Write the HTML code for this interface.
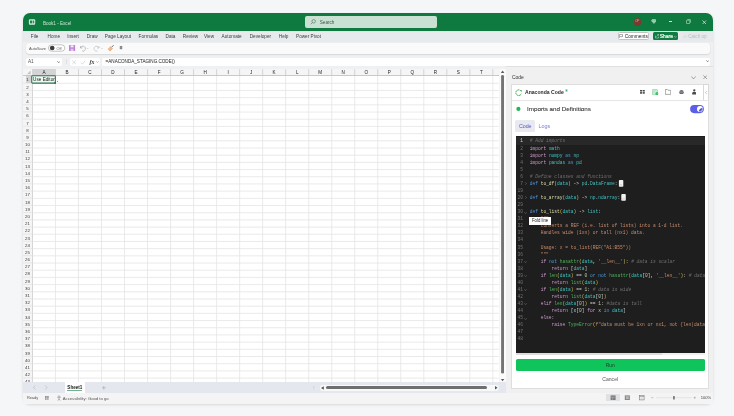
<!DOCTYPE html><html><head><meta charset="utf-8"><style>
html,body{margin:0;padding:0;width:734px;height:416px;overflow:hidden;background:#f5f6f8;font-family:"Liberation Sans", sans-serif;}
*{box-sizing:border-box}
</style></head><body><div style="position:absolute;left:0;top:0;width:734px;height:416px;will-change:transform">
<div style="position:absolute;left:23px;top:13.2px;width:689.90px;height:390.80px;background:#eef0f2;border-radius:7px;box-shadow:0 1px 3px rgba(0,0,0,.12);overflow:hidden"></div>
<div style="position:absolute;left:23px;top:13.2px;width:689.90px;height:17.80px;background:#0e7a3f;border-radius:7px 7px 0 0"></div>
<div style="position:absolute;left:23px;top:31px;width:689.90px;height:1.00px;background:#d3ede1"></div>
<div style="position:absolute;left:23px;top:32px;width:689.90px;height:9.50px;background:#e8ebee"></div>
<svg style="position:absolute;left:0;top:0" width="734" height="416"><rect x="28.9" y="19.2" width="6.3" height="5.5" rx="1" fill="#cfeedd"/><rect x="30" y="20.5" width="2" height="2.9" fill="#2a7f52"/><rect x="32.6" y="20.5" width="1.6" height="2.9" fill="#3d8c60"/></svg>
<div style="position:absolute;left:42.9px;top:20.54px;font-size:4.6px;line-height:5.52px;color:#c9e6d3;font-weight:normal;white-space:pre;">Book1 - Excel</div>
<div style="position:absolute;left:305px;top:16.3px;width:132.40px;height:11.30px;background:#c9e1d3;border-radius:2px"></div>
<svg style="position:absolute;left:310px;top:19.4px" width="6" height="6" viewBox="0 0 6 6"><circle cx="3.7" cy="2.3" r="1.75" fill="none" stroke="#3a5646" stroke-width="0.5"/><line x1="2.4" y1="3.6" x2="0.7" y2="5.3" stroke="#3a5646" stroke-width="0.5"/></svg>
<div style="position:absolute;left:319.8px;top:20.24px;font-size:4.6px;line-height:5.52px;color:#3d5a4a;font-weight:normal;white-space:pre;">Search</div>
<div style="position:absolute;left:633.5px;top:18.4px;width:7.4px;height:7.4px;border-radius:50%;background:#7a3a30"></div>
<div style="position:absolute;left:537.2px;top:20.38px;width:200px;text-align:center;font-size:3.2px;line-height:3.84px;color:#e7a99c;font-weight:normal;white-space:pre;">OP</div>
<svg style="position:absolute;left:650.6px;top:19.4px" width="5.8" height="5" viewBox="0 0 5.8 5"><path d="M0.4 1.6 L1.5 0.4 H4.3 L5.4 1.6 L2.9 4.6 Z" fill="#d4efe0" stroke="#e8f6ee" stroke-width="0.4"/><path d="M0.6 1.7 H5.2 M2.2 0.5 L1.8 1.7 L2.9 4.4 L4 1.7 L3.6 0.5" fill="none" stroke="#107c41" stroke-width="0.3"/></svg>
<div style="position:absolute;left:668.8px;top:21.2px;width:3.40px;height:0.50px;background:#cfe8da"></div>
<svg style="position:absolute;left:685.6px;top:19.4px" width="5" height="5" viewBox="0 0 5 5"><rect x="0.4" y="1.2" width="3.4" height="3.4" rx="0.7" fill="none" stroke="#e0f2e8" stroke-width="0.55"/><path d="M1.4 0.4 H3.8 Q4.6 0.4 4.6 1.2 V3.6" fill="none" stroke="#e0f2e8" stroke-width="0.5"/></svg>
<svg style="position:absolute;left:702.4px;top:19.6px" width="4.6" height="4.6" viewBox="0 0 4.6 4.6"><path d="M0.5 0.5 L4.1 4.1 M4.1 0.5 L0.5 4.1" stroke="#e6f4ec" stroke-width="0.7"/></svg>
<div style="position:absolute;left:30.8px;top:33.88px;font-size:4.7px;line-height:5.64px;color:#3a3a3a;font-weight:normal;white-space:pre;">File</div>
<div style="position:absolute;left:47.6px;top:33.88px;font-size:4.7px;line-height:5.64px;color:#3a3a3a;font-weight:normal;white-space:pre;">Home</div>
<div style="position:absolute;left:67.2px;top:33.88px;font-size:4.7px;line-height:5.64px;color:#3a3a3a;font-weight:normal;white-space:pre;">Insert</div>
<div style="position:absolute;left:86.7px;top:33.88px;font-size:4.7px;line-height:5.64px;color:#3a3a3a;font-weight:normal;white-space:pre;">Draw</div>
<div style="position:absolute;left:104.8px;top:33.88px;font-size:4.7px;line-height:5.64px;color:#3a3a3a;font-weight:normal;white-space:pre;">Page Layout</div>
<div style="position:absolute;left:138.6px;top:33.88px;font-size:4.7px;line-height:5.64px;color:#3a3a3a;font-weight:normal;white-space:pre;">Formulas</div>
<div style="position:absolute;left:165.5px;top:33.88px;font-size:4.7px;line-height:5.64px;color:#3a3a3a;font-weight:normal;white-space:pre;">Data</div>
<div style="position:absolute;left:182.8px;top:33.88px;font-size:4.7px;line-height:5.64px;color:#3a3a3a;font-weight:normal;white-space:pre;">Review</div>
<div style="position:absolute;left:204px;top:33.88px;font-size:4.7px;line-height:5.64px;color:#3a3a3a;font-weight:normal;white-space:pre;">View</div>
<div style="position:absolute;left:221.6px;top:33.88px;font-size:4.7px;line-height:5.64px;color:#3a3a3a;font-weight:normal;white-space:pre;">Automate</div>
<div style="position:absolute;left:249.7px;top:33.88px;font-size:4.7px;line-height:5.64px;color:#3a3a3a;font-weight:normal;white-space:pre;">Developer</div>
<div style="position:absolute;left:278.8px;top:33.88px;font-size:4.7px;line-height:5.64px;color:#3a3a3a;font-weight:normal;white-space:pre;">Help</div>
<div style="position:absolute;left:296px;top:33.88px;font-size:4.7px;line-height:5.64px;color:#3a3a3a;font-weight:normal;white-space:pre;">Power Pivot</div>
<div style="position:absolute;left:617.7px;top:32.4px;width:31.00px;height:7.80px;background:#fff;border:0.5px solid #c4c4c4;border-radius:1.5px"></div>
<div style="position:absolute;left:624.8px;top:34.15px;font-size:4.75px;line-height:5.70px;color:#262626;font-weight:normal;white-space:pre;">Comments</div>
<svg style="position:absolute;left:619.2px;top:34.2px" width="4" height="4" viewBox="0 0 4 4"><path d="M0.4 0.4 H3.6 V2.6 H1.4 L0.4 3.5 Z" fill="none" stroke="#444" stroke-width="0.45"/></svg>
<div style="position:absolute;left:652.6px;top:32.4px;width:25.40px;height:7.80px;background:#107c41;border-radius:1.5px"></div>
<svg style="position:absolute;left:654.6px;top:34px" width="4" height="4.5" viewBox="0 0 4 4.5"><path d="M0.5 1.6 V4 H3.5 V2.6 M1.5 2.6 L3.6 0.5 M2.2 0.4 H3.6 V1.8" fill="none" stroke="#e8f4ec" stroke-width="0.45"/></svg>
<div style="position:absolute;left:659.8px;top:34.06px;font-size:4.9px;line-height:5.88px;color:#f4faf6;font-weight:normal;white-space:pre;-webkit-text-stroke:0.2px #f4faf6">Share</div>
<svg style="position:absolute;left:674.3px;top:35.8px" width="2.6" height="1.8" viewBox="0 0 2.6 1.8"><path d="M0.2 0.2 L1.3 1.5 L2.4 0.2" fill="none" stroke="#e8f4ec" stroke-width="0.45"/></svg>
<div style="position:absolute;left:681.7px;top:32.4px;width:26.50px;height:7.80px;background:#e6e8ea;border-radius:1.5px"></div>
<svg style="position:absolute;left:683.3px;top:35px" width="4" height="3" viewBox="0 0 4 3"><path d="M0.2 1.6 L1 2.6 L2 0.6 L2.8 1.6 H3.8" fill="none" stroke="#c2c6ca" stroke-width="0.4"/></svg>
<div style="position:absolute;left:688.2px;top:34.24px;font-size:4.6px;line-height:5.52px;color:#bcc0c4;font-weight:normal;white-space:pre;">Catch up</div>
<div style="position:absolute;left:25.7px;top:42.5px;width:683.90px;height:11.50px;background:#fafafa;border-radius:3px;box-shadow:0 0.6px 1.2px rgba(0,0,0,.18)"></div>
<div style="position:absolute;left:29.1px;top:46.54px;font-size:4.1px;line-height:4.92px;color:#555;font-weight:normal;white-space:pre;transform:scaleX(0.95);transform-origin:0 0">AutoSave</div>
<svg style="position:absolute;left:0;top:0" width="734" height="416"><rect x="48.4" y="44.8" width="16.4" height="6.4" rx="3.2" fill="#fff" stroke="#8c8c8c" stroke-width="0.5"/><circle cx="52.2" cy="48" r="2.35" fill="#3c3c3c"/></svg>
<div style="position:absolute;left:56.6px;top:46.52px;font-size:3.8px;line-height:4.56px;color:#666;font-weight:normal;white-space:pre;">Off</div>
<svg style="position:absolute;left:0;top:0" width="734" height="416"><rect x="69" y="45" width="6.1" height="6" rx="0.6" fill="#bf80d8"/><rect x="70.5" y="45.3" width="3.1" height="2.1" fill="#f4e8f9"/><rect x="70.6" y="48.7" width="2.9" height="2.3" fill="#e4c8ef"/></svg>
<svg style="position:absolute;left:79px;top:44.5px" width="10" height="7" viewBox="0 0 10 7"><path d="M1.5 1 V3 H3.5 M1.6 2.9 A2.5 2.5 0 1 1 3 6" fill="none" stroke="#9aa0a6" stroke-width="0.6"/><path d="M7.8 3 L8.6 3.8 L9.4 3" fill="none" stroke="#b0b4b8" stroke-width="0.5"/></svg>
<svg style="position:absolute;left:93px;top:44.5px" width="10" height="7" viewBox="0 0 10 7"><path d="M6 1 V3 H4 M5.9 2.9 A2.5 2.5 0 1 0 4.5 6" fill="none" stroke="#b4b8bc" stroke-width="0.6"/><path d="M8.2 3 L9 3.8 L9.8 3" fill="none" stroke="#b0b4b8" stroke-width="0.5"/></svg>
<svg style="position:absolute;left:0;top:0" width="734" height="416"><path d="M111.6 47.2 L113.6 45.2" stroke="#6a6a6a" stroke-width="1"/><path d="M108.6 48.4 L110.6 46.6 L112.6 48.4 L110.2 51 Q109 50.6 108.4 49.6 Z" fill="#f2b98c" stroke="#d98b4e" stroke-width="0.4"/></svg>
<svg style="position:absolute;left:0;top:0" width="734" height="416"><rect x="119.8" y="46" width="2.4" height="3.2" fill="#777"/><path d="M119.6 47 H122.4 M119.6 48.1 H122.4" stroke="#ddd" stroke-width="0.3"/></svg>
<div style="position:absolute;left:25.7px;top:57.8px;width:36.00px;height:8.30px;background:#fff;border-radius:2px"></div>
<div style="position:absolute;left:27.9px;top:59.18px;font-size:4.7px;line-height:5.64px;color:#555;font-weight:normal;white-space:pre;">A1</div>
<svg style="position:absolute;left:56.8px;top:60.8px" width="3.4" height="2.2" viewBox="0 0 3.4 2.2"><path d="M0.3 0.3 L1.7 1.8 L3.1 0.3" fill="none" stroke="#444" stroke-width="0.6"/></svg>
<svg style="position:absolute;left:65px;top:59px" width="3" height="6" viewBox="0 0 3 6"><circle cx="1.3" cy="0.9" r="0.35" fill="#999"/><circle cx="1.3" cy="2.5" r="0.35" fill="#999"/><circle cx="1.3" cy="4.1" r="0.35" fill="#999"/></svg>
<div style="position:absolute;left:69.9px;top:57.8px;width:30.20px;height:8.30px;background:#fff;border-radius:2px"></div>
<svg style="position:absolute;left:72px;top:59.5px" width="30" height="6" viewBox="0 0 30 6"><path d="M0.2 0.4 L4 4.2 M4 0.4 L0.2 4.2" stroke="#b4b4b4" stroke-width="0.45"/><path d="M8.8 2.6 L10.4 4.2 L13.2 0.6" fill="none" stroke="#b4b4b4" stroke-width="0.45"/></svg>
<div style="position:absolute;left:89.6px;top:58.52px;font-size:5.8px;line-height:6.96px;color:#333;font-weight:normal;white-space:pre;font-family:'Liberation Serif',serif"><i><b>fx</b></i></div>
<svg style="position:absolute;left:96.3px;top:61px" width="3" height="2" viewBox="0 0 3 2"><path d="M0.2 0.3 L1.5 1.6 L2.8 0.3" fill="none" stroke="#888" stroke-width="0.5"/></svg>
<div style="position:absolute;left:102.4px;top:57.8px;width:607.20px;height:8.30px;background:#fff;border-radius:2px"></div>
<div style="position:absolute;left:105.6px;top:59.34px;font-size:4.6px;line-height:5.52px;color:#222;font-weight:normal;white-space:pre;">=ANACONDA_STAGING.CODE()</div>
<svg style="position:absolute;left:705.6px;top:60.1px" width="3.4" height="2.2" viewBox="0 0 3.4 2.2"><path d="M0.3 0.3 L1.7 1.8 L3.1 0.3" fill="none" stroke="#444" stroke-width="0.6"/></svg>
<div style="position:absolute;left:23.0px;top:68.6px;width:475.80px;height:313.80px;background:#fff"></div>
<div style="position:absolute;left:23.0px;top:68.6px;width:475.80px;height:7.30px;background:#f5f5f5"></div>
<div style="position:absolute;left:23.0px;top:75.9px;width:9.45px;height:306.50px;background:#f5f5f5"></div>
<div style="position:absolute;left:32.45px;top:68.6px;width:23.02px;height:7.30px;background:#d4d4d4"></div>
<div style="position:absolute;left:25.8px;top:75.9px;width:6.65px;height:7.19px;background:#d4d4d4"></div>
<div style="position:absolute;left:23.0px;top:75.30000000000001px;width:475.80px;height:0.60px;background:#c9c9c9"></div>
<div style="position:absolute;left:31.85px;top:68.6px;width:0.60px;height:313.80px;background:#d6d6d6"></div>
<svg style="position:absolute;left:0;top:0" width="734" height="416"><line x1="55.47" y1="69.20" x2="55.47" y2="75.90" stroke="#c4c4c4" stroke-width="0.7"/><line x1="55.47" y1="75.90" x2="55.47" y2="382.40" stroke="#e4e4e4" stroke-width="0.8"/><line x1="78.49" y1="69.20" x2="78.49" y2="75.90" stroke="#c4c4c4" stroke-width="0.7"/><line x1="78.49" y1="75.90" x2="78.49" y2="382.40" stroke="#e4e4e4" stroke-width="0.8"/><line x1="101.51" y1="69.20" x2="101.51" y2="75.90" stroke="#c4c4c4" stroke-width="0.7"/><line x1="101.51" y1="75.90" x2="101.51" y2="382.40" stroke="#e4e4e4" stroke-width="0.8"/><line x1="124.53" y1="69.20" x2="124.53" y2="75.90" stroke="#c4c4c4" stroke-width="0.7"/><line x1="124.53" y1="75.90" x2="124.53" y2="382.40" stroke="#e4e4e4" stroke-width="0.8"/><line x1="147.55" y1="69.20" x2="147.55" y2="75.90" stroke="#c4c4c4" stroke-width="0.7"/><line x1="147.55" y1="75.90" x2="147.55" y2="382.40" stroke="#e4e4e4" stroke-width="0.8"/><line x1="170.57" y1="69.20" x2="170.57" y2="75.90" stroke="#c4c4c4" stroke-width="0.7"/><line x1="170.57" y1="75.90" x2="170.57" y2="382.40" stroke="#e4e4e4" stroke-width="0.8"/><line x1="193.59" y1="69.20" x2="193.59" y2="75.90" stroke="#c4c4c4" stroke-width="0.7"/><line x1="193.59" y1="75.90" x2="193.59" y2="382.40" stroke="#e4e4e4" stroke-width="0.8"/><line x1="216.61" y1="69.20" x2="216.61" y2="75.90" stroke="#c4c4c4" stroke-width="0.7"/><line x1="216.61" y1="75.90" x2="216.61" y2="382.40" stroke="#e4e4e4" stroke-width="0.8"/><line x1="239.63" y1="69.20" x2="239.63" y2="75.90" stroke="#c4c4c4" stroke-width="0.7"/><line x1="239.63" y1="75.90" x2="239.63" y2="382.40" stroke="#e4e4e4" stroke-width="0.8"/><line x1="262.65" y1="69.20" x2="262.65" y2="75.90" stroke="#c4c4c4" stroke-width="0.7"/><line x1="262.65" y1="75.90" x2="262.65" y2="382.40" stroke="#e4e4e4" stroke-width="0.8"/><line x1="285.67" y1="69.20" x2="285.67" y2="75.90" stroke="#c4c4c4" stroke-width="0.7"/><line x1="285.67" y1="75.90" x2="285.67" y2="382.40" stroke="#e4e4e4" stroke-width="0.8"/><line x1="308.69" y1="69.20" x2="308.69" y2="75.90" stroke="#c4c4c4" stroke-width="0.7"/><line x1="308.69" y1="75.90" x2="308.69" y2="382.40" stroke="#e4e4e4" stroke-width="0.8"/><line x1="331.71" y1="69.20" x2="331.71" y2="75.90" stroke="#c4c4c4" stroke-width="0.7"/><line x1="331.71" y1="75.90" x2="331.71" y2="382.40" stroke="#e4e4e4" stroke-width="0.8"/><line x1="354.73" y1="69.20" x2="354.73" y2="75.90" stroke="#c4c4c4" stroke-width="0.7"/><line x1="354.73" y1="75.90" x2="354.73" y2="382.40" stroke="#e4e4e4" stroke-width="0.8"/><line x1="377.75" y1="69.20" x2="377.75" y2="75.90" stroke="#c4c4c4" stroke-width="0.7"/><line x1="377.75" y1="75.90" x2="377.75" y2="382.40" stroke="#e4e4e4" stroke-width="0.8"/><line x1="400.77" y1="69.20" x2="400.77" y2="75.90" stroke="#c4c4c4" stroke-width="0.7"/><line x1="400.77" y1="75.90" x2="400.77" y2="382.40" stroke="#e4e4e4" stroke-width="0.8"/><line x1="423.79" y1="69.20" x2="423.79" y2="75.90" stroke="#c4c4c4" stroke-width="0.7"/><line x1="423.79" y1="75.90" x2="423.79" y2="382.40" stroke="#e4e4e4" stroke-width="0.8"/><line x1="446.81" y1="69.20" x2="446.81" y2="75.90" stroke="#c4c4c4" stroke-width="0.7"/><line x1="446.81" y1="75.90" x2="446.81" y2="382.40" stroke="#e4e4e4" stroke-width="0.8"/><line x1="469.83" y1="69.20" x2="469.83" y2="75.90" stroke="#c4c4c4" stroke-width="0.7"/><line x1="469.83" y1="75.90" x2="469.83" y2="382.40" stroke="#e4e4e4" stroke-width="0.8"/><line x1="492.85" y1="69.20" x2="492.85" y2="75.90" stroke="#c4c4c4" stroke-width="0.7"/><line x1="492.85" y1="75.90" x2="492.85" y2="382.40" stroke="#e4e4e4" stroke-width="0.8"/><line x1="32.45" y1="83.29" x2="498.80" y2="83.29" stroke="#e4e4e4" stroke-width="0.8"/><line x1="23.00" y1="83.09" x2="32.45" y2="83.09" stroke="#d8d8d8" stroke-width="0.5"/><line x1="32.45" y1="90.48" x2="498.80" y2="90.48" stroke="#e4e4e4" stroke-width="0.8"/><line x1="23.00" y1="90.28" x2="32.45" y2="90.28" stroke="#d8d8d8" stroke-width="0.5"/><line x1="32.45" y1="97.67" x2="498.80" y2="97.67" stroke="#e4e4e4" stroke-width="0.8"/><line x1="23.00" y1="97.47" x2="32.45" y2="97.47" stroke="#d8d8d8" stroke-width="0.5"/><line x1="32.45" y1="104.86" x2="498.80" y2="104.86" stroke="#e4e4e4" stroke-width="0.8"/><line x1="23.00" y1="104.66" x2="32.45" y2="104.66" stroke="#d8d8d8" stroke-width="0.5"/><line x1="32.45" y1="112.05" x2="498.80" y2="112.05" stroke="#e4e4e4" stroke-width="0.8"/><line x1="23.00" y1="111.85" x2="32.45" y2="111.85" stroke="#d8d8d8" stroke-width="0.5"/><line x1="32.45" y1="119.24" x2="498.80" y2="119.24" stroke="#e4e4e4" stroke-width="0.8"/><line x1="23.00" y1="119.04" x2="32.45" y2="119.04" stroke="#d8d8d8" stroke-width="0.5"/><line x1="32.45" y1="126.43" x2="498.80" y2="126.43" stroke="#e4e4e4" stroke-width="0.8"/><line x1="23.00" y1="126.23" x2="32.45" y2="126.23" stroke="#d8d8d8" stroke-width="0.5"/><line x1="32.45" y1="133.62" x2="498.80" y2="133.62" stroke="#e4e4e4" stroke-width="0.8"/><line x1="23.00" y1="133.42" x2="32.45" y2="133.42" stroke="#d8d8d8" stroke-width="0.5"/><line x1="32.45" y1="140.81" x2="498.80" y2="140.81" stroke="#e4e4e4" stroke-width="0.8"/><line x1="23.00" y1="140.61" x2="32.45" y2="140.61" stroke="#d8d8d8" stroke-width="0.5"/><line x1="32.45" y1="148.00" x2="498.80" y2="148.00" stroke="#e4e4e4" stroke-width="0.8"/><line x1="23.00" y1="147.80" x2="32.45" y2="147.80" stroke="#d8d8d8" stroke-width="0.5"/><line x1="32.45" y1="155.19" x2="498.80" y2="155.19" stroke="#e4e4e4" stroke-width="0.8"/><line x1="23.00" y1="154.99" x2="32.45" y2="154.99" stroke="#d8d8d8" stroke-width="0.5"/><line x1="32.45" y1="162.38" x2="498.80" y2="162.38" stroke="#e4e4e4" stroke-width="0.8"/><line x1="23.00" y1="162.18" x2="32.45" y2="162.18" stroke="#d8d8d8" stroke-width="0.5"/><line x1="32.45" y1="169.57" x2="498.80" y2="169.57" stroke="#e4e4e4" stroke-width="0.8"/><line x1="23.00" y1="169.37" x2="32.45" y2="169.37" stroke="#d8d8d8" stroke-width="0.5"/><line x1="32.45" y1="176.76" x2="498.80" y2="176.76" stroke="#e4e4e4" stroke-width="0.8"/><line x1="23.00" y1="176.56" x2="32.45" y2="176.56" stroke="#d8d8d8" stroke-width="0.5"/><line x1="32.45" y1="183.95" x2="498.80" y2="183.95" stroke="#e4e4e4" stroke-width="0.8"/><line x1="23.00" y1="183.75" x2="32.45" y2="183.75" stroke="#d8d8d8" stroke-width="0.5"/><line x1="32.45" y1="191.14" x2="498.80" y2="191.14" stroke="#e4e4e4" stroke-width="0.8"/><line x1="23.00" y1="190.94" x2="32.45" y2="190.94" stroke="#d8d8d8" stroke-width="0.5"/><line x1="32.45" y1="198.33" x2="498.80" y2="198.33" stroke="#e4e4e4" stroke-width="0.8"/><line x1="23.00" y1="198.13" x2="32.45" y2="198.13" stroke="#d8d8d8" stroke-width="0.5"/><line x1="32.45" y1="205.52" x2="498.80" y2="205.52" stroke="#e4e4e4" stroke-width="0.8"/><line x1="23.00" y1="205.32" x2="32.45" y2="205.32" stroke="#d8d8d8" stroke-width="0.5"/><line x1="32.45" y1="212.71" x2="498.80" y2="212.71" stroke="#e4e4e4" stroke-width="0.8"/><line x1="23.00" y1="212.51" x2="32.45" y2="212.51" stroke="#d8d8d8" stroke-width="0.5"/><line x1="32.45" y1="219.90" x2="498.80" y2="219.90" stroke="#e4e4e4" stroke-width="0.8"/><line x1="23.00" y1="219.70" x2="32.45" y2="219.70" stroke="#d8d8d8" stroke-width="0.5"/><line x1="32.45" y1="227.09" x2="498.80" y2="227.09" stroke="#e4e4e4" stroke-width="0.8"/><line x1="23.00" y1="226.89" x2="32.45" y2="226.89" stroke="#d8d8d8" stroke-width="0.5"/><line x1="32.45" y1="234.28" x2="498.80" y2="234.28" stroke="#e4e4e4" stroke-width="0.8"/><line x1="23.00" y1="234.08" x2="32.45" y2="234.08" stroke="#d8d8d8" stroke-width="0.5"/><line x1="32.45" y1="241.47" x2="498.80" y2="241.47" stroke="#e4e4e4" stroke-width="0.8"/><line x1="23.00" y1="241.27" x2="32.45" y2="241.27" stroke="#d8d8d8" stroke-width="0.5"/><line x1="32.45" y1="248.66" x2="498.80" y2="248.66" stroke="#e4e4e4" stroke-width="0.8"/><line x1="23.00" y1="248.46" x2="32.45" y2="248.46" stroke="#d8d8d8" stroke-width="0.5"/><line x1="32.45" y1="255.85" x2="498.80" y2="255.85" stroke="#e4e4e4" stroke-width="0.8"/><line x1="23.00" y1="255.65" x2="32.45" y2="255.65" stroke="#d8d8d8" stroke-width="0.5"/><line x1="32.45" y1="263.04" x2="498.80" y2="263.04" stroke="#e4e4e4" stroke-width="0.8"/><line x1="23.00" y1="262.84" x2="32.45" y2="262.84" stroke="#d8d8d8" stroke-width="0.5"/><line x1="32.45" y1="270.23" x2="498.80" y2="270.23" stroke="#e4e4e4" stroke-width="0.8"/><line x1="23.00" y1="270.03" x2="32.45" y2="270.03" stroke="#d8d8d8" stroke-width="0.5"/><line x1="32.45" y1="277.42" x2="498.80" y2="277.42" stroke="#e4e4e4" stroke-width="0.8"/><line x1="23.00" y1="277.22" x2="32.45" y2="277.22" stroke="#d8d8d8" stroke-width="0.5"/><line x1="32.45" y1="284.61" x2="498.80" y2="284.61" stroke="#e4e4e4" stroke-width="0.8"/><line x1="23.00" y1="284.41" x2="32.45" y2="284.41" stroke="#d8d8d8" stroke-width="0.5"/><line x1="32.45" y1="291.80" x2="498.80" y2="291.80" stroke="#e4e4e4" stroke-width="0.8"/><line x1="23.00" y1="291.60" x2="32.45" y2="291.60" stroke="#d8d8d8" stroke-width="0.5"/><line x1="32.45" y1="298.99" x2="498.80" y2="298.99" stroke="#e4e4e4" stroke-width="0.8"/><line x1="23.00" y1="298.79" x2="32.45" y2="298.79" stroke="#d8d8d8" stroke-width="0.5"/><line x1="32.45" y1="306.18" x2="498.80" y2="306.18" stroke="#e4e4e4" stroke-width="0.8"/><line x1="23.00" y1="305.98" x2="32.45" y2="305.98" stroke="#d8d8d8" stroke-width="0.5"/><line x1="32.45" y1="313.37" x2="498.80" y2="313.37" stroke="#e4e4e4" stroke-width="0.8"/><line x1="23.00" y1="313.17" x2="32.45" y2="313.17" stroke="#d8d8d8" stroke-width="0.5"/><line x1="32.45" y1="320.56" x2="498.80" y2="320.56" stroke="#e4e4e4" stroke-width="0.8"/><line x1="23.00" y1="320.36" x2="32.45" y2="320.36" stroke="#d8d8d8" stroke-width="0.5"/><line x1="32.45" y1="327.75" x2="498.80" y2="327.75" stroke="#e4e4e4" stroke-width="0.8"/><line x1="23.00" y1="327.55" x2="32.45" y2="327.55" stroke="#d8d8d8" stroke-width="0.5"/><line x1="32.45" y1="334.94" x2="498.80" y2="334.94" stroke="#e4e4e4" stroke-width="0.8"/><line x1="23.00" y1="334.74" x2="32.45" y2="334.74" stroke="#d8d8d8" stroke-width="0.5"/><line x1="32.45" y1="342.13" x2="498.80" y2="342.13" stroke="#e4e4e4" stroke-width="0.8"/><line x1="23.00" y1="341.93" x2="32.45" y2="341.93" stroke="#d8d8d8" stroke-width="0.5"/><line x1="32.45" y1="349.32" x2="498.80" y2="349.32" stroke="#e4e4e4" stroke-width="0.8"/><line x1="23.00" y1="349.12" x2="32.45" y2="349.12" stroke="#d8d8d8" stroke-width="0.5"/><line x1="32.45" y1="356.51" x2="498.80" y2="356.51" stroke="#e4e4e4" stroke-width="0.8"/><line x1="23.00" y1="356.31" x2="32.45" y2="356.31" stroke="#d8d8d8" stroke-width="0.5"/><line x1="32.45" y1="363.70" x2="498.80" y2="363.70" stroke="#e4e4e4" stroke-width="0.8"/><line x1="23.00" y1="363.50" x2="32.45" y2="363.50" stroke="#d8d8d8" stroke-width="0.5"/><line x1="32.45" y1="370.89" x2="498.80" y2="370.89" stroke="#e4e4e4" stroke-width="0.8"/><line x1="23.00" y1="370.69" x2="32.45" y2="370.69" stroke="#d8d8d8" stroke-width="0.5"/><line x1="32.45" y1="378.08" x2="498.80" y2="378.08" stroke="#e4e4e4" stroke-width="0.8"/><line x1="23.00" y1="377.88" x2="32.45" y2="377.88" stroke="#d8d8d8" stroke-width="0.5"/></svg>
<div style="position:absolute;left:-56.04px;top:69.74px;width:200px;text-align:center;font-size:4.6px;line-height:5.52px;color:#222;font-weight:normal;white-space:pre;">A</div>
<div style="position:absolute;left:-33.019999999999996px;top:69.74px;width:200px;text-align:center;font-size:4.6px;line-height:5.52px;color:#222;font-weight:normal;white-space:pre;">B</div>
<div style="position:absolute;left:-10.0px;top:69.74px;width:200px;text-align:center;font-size:4.6px;line-height:5.52px;color:#222;font-weight:normal;white-space:pre;">C</div>
<div style="position:absolute;left:13.019999999999996px;top:69.74px;width:200px;text-align:center;font-size:4.6px;line-height:5.52px;color:#222;font-weight:normal;white-space:pre;">D</div>
<div style="position:absolute;left:36.04000000000002px;top:69.74px;width:200px;text-align:center;font-size:4.6px;line-height:5.52px;color:#222;font-weight:normal;white-space:pre;">E</div>
<div style="position:absolute;left:59.06px;top:69.74px;width:200px;text-align:center;font-size:4.6px;line-height:5.52px;color:#222;font-weight:normal;white-space:pre;">F</div>
<div style="position:absolute;left:82.07999999999998px;top:69.74px;width:200px;text-align:center;font-size:4.6px;line-height:5.52px;color:#222;font-weight:normal;white-space:pre;">G</div>
<div style="position:absolute;left:105.10000000000002px;top:69.74px;width:200px;text-align:center;font-size:4.6px;line-height:5.52px;color:#222;font-weight:normal;white-space:pre;">H</div>
<div style="position:absolute;left:128.12px;top:69.74px;width:200px;text-align:center;font-size:4.6px;line-height:5.52px;color:#222;font-weight:normal;white-space:pre;">I</div>
<div style="position:absolute;left:151.14px;top:69.74px;width:200px;text-align:center;font-size:4.6px;line-height:5.52px;color:#222;font-weight:normal;white-space:pre;">J</div>
<div style="position:absolute;left:174.16000000000003px;top:69.74px;width:200px;text-align:center;font-size:4.6px;line-height:5.52px;color:#222;font-weight:normal;white-space:pre;">K</div>
<div style="position:absolute;left:197.18px;top:69.74px;width:200px;text-align:center;font-size:4.6px;line-height:5.52px;color:#222;font-weight:normal;white-space:pre;">L</div>
<div style="position:absolute;left:220.2px;top:69.74px;width:200px;text-align:center;font-size:4.6px;line-height:5.52px;color:#222;font-weight:normal;white-space:pre;">M</div>
<div style="position:absolute;left:243.21999999999997px;top:69.74px;width:200px;text-align:center;font-size:4.6px;line-height:5.52px;color:#222;font-weight:normal;white-space:pre;">N</div>
<div style="position:absolute;left:266.24px;top:69.74px;width:200px;text-align:center;font-size:4.6px;line-height:5.52px;color:#222;font-weight:normal;white-space:pre;">O</div>
<div style="position:absolute;left:289.26px;top:69.74px;width:200px;text-align:center;font-size:4.6px;line-height:5.52px;color:#222;font-weight:normal;white-space:pre;">P</div>
<div style="position:absolute;left:312.28px;top:69.74px;width:200px;text-align:center;font-size:4.6px;line-height:5.52px;color:#222;font-weight:normal;white-space:pre;">Q</div>
<div style="position:absolute;left:335.29999999999995px;top:69.74px;width:200px;text-align:center;font-size:4.6px;line-height:5.52px;color:#222;font-weight:normal;white-space:pre;">R</div>
<div style="position:absolute;left:358.32px;top:69.74px;width:200px;text-align:center;font-size:4.6px;line-height:5.52px;color:#222;font-weight:normal;white-space:pre;">S</div>
<div style="position:absolute;left:381.34px;top:69.74px;width:200px;text-align:center;font-size:4.6px;line-height:5.52px;color:#222;font-weight:normal;white-space:pre;">T</div>
<div style="position:absolute;left:-72.5px;top:77.36px;width:200px;text-align:center;font-size:4.4px;line-height:5.28px;color:#3a3a3a;font-weight:normal;white-space:pre;">1</div>
<div style="position:absolute;left:-72.5px;top:84.55px;width:200px;text-align:center;font-size:4.4px;line-height:5.28px;color:#3a3a3a;font-weight:normal;white-space:pre;">2</div>
<div style="position:absolute;left:-72.5px;top:91.73px;width:200px;text-align:center;font-size:4.4px;line-height:5.28px;color:#3a3a3a;font-weight:normal;white-space:pre;">3</div>
<div style="position:absolute;left:-72.5px;top:98.93px;width:200px;text-align:center;font-size:4.4px;line-height:5.28px;color:#3a3a3a;font-weight:normal;white-space:pre;">4</div>
<div style="position:absolute;left:-72.5px;top:106.12px;width:200px;text-align:center;font-size:4.4px;line-height:5.28px;color:#3a3a3a;font-weight:normal;white-space:pre;">5</div>
<div style="position:absolute;left:-72.5px;top:113.31px;width:200px;text-align:center;font-size:4.4px;line-height:5.28px;color:#3a3a3a;font-weight:normal;white-space:pre;">6</div>
<div style="position:absolute;left:-72.5px;top:120.50px;width:200px;text-align:center;font-size:4.4px;line-height:5.28px;color:#3a3a3a;font-weight:normal;white-space:pre;">7</div>
<div style="position:absolute;left:-72.5px;top:127.69px;width:200px;text-align:center;font-size:4.4px;line-height:5.28px;color:#3a3a3a;font-weight:normal;white-space:pre;">8</div>
<div style="position:absolute;left:-72.5px;top:134.88px;width:200px;text-align:center;font-size:4.4px;line-height:5.28px;color:#3a3a3a;font-weight:normal;white-space:pre;">9</div>
<div style="position:absolute;left:-72.5px;top:142.07px;width:200px;text-align:center;font-size:4.4px;line-height:5.28px;color:#3a3a3a;font-weight:normal;white-space:pre;">10</div>
<div style="position:absolute;left:-72.5px;top:149.26px;width:200px;text-align:center;font-size:4.4px;line-height:5.28px;color:#3a3a3a;font-weight:normal;white-space:pre;">11</div>
<div style="position:absolute;left:-72.5px;top:156.45px;width:200px;text-align:center;font-size:4.4px;line-height:5.28px;color:#3a3a3a;font-weight:normal;white-space:pre;">12</div>
<div style="position:absolute;left:-72.5px;top:163.64px;width:200px;text-align:center;font-size:4.4px;line-height:5.28px;color:#3a3a3a;font-weight:normal;white-space:pre;">13</div>
<div style="position:absolute;left:-72.5px;top:170.83px;width:200px;text-align:center;font-size:4.4px;line-height:5.28px;color:#3a3a3a;font-weight:normal;white-space:pre;">14</div>
<div style="position:absolute;left:-72.5px;top:178.02px;width:200px;text-align:center;font-size:4.4px;line-height:5.28px;color:#3a3a3a;font-weight:normal;white-space:pre;">15</div>
<div style="position:absolute;left:-72.5px;top:185.21px;width:200px;text-align:center;font-size:4.4px;line-height:5.28px;color:#3a3a3a;font-weight:normal;white-space:pre;">16</div>
<div style="position:absolute;left:-72.5px;top:192.40px;width:200px;text-align:center;font-size:4.4px;line-height:5.28px;color:#3a3a3a;font-weight:normal;white-space:pre;">17</div>
<div style="position:absolute;left:-72.5px;top:199.59px;width:200px;text-align:center;font-size:4.4px;line-height:5.28px;color:#3a3a3a;font-weight:normal;white-space:pre;">18</div>
<div style="position:absolute;left:-72.5px;top:206.78px;width:200px;text-align:center;font-size:4.4px;line-height:5.28px;color:#3a3a3a;font-weight:normal;white-space:pre;">19</div>
<div style="position:absolute;left:-72.5px;top:213.97px;width:200px;text-align:center;font-size:4.4px;line-height:5.28px;color:#3a3a3a;font-weight:normal;white-space:pre;">20</div>
<div style="position:absolute;left:-72.5px;top:221.16px;width:200px;text-align:center;font-size:4.4px;line-height:5.28px;color:#3a3a3a;font-weight:normal;white-space:pre;">21</div>
<div style="position:absolute;left:-72.5px;top:228.35px;width:200px;text-align:center;font-size:4.4px;line-height:5.28px;color:#3a3a3a;font-weight:normal;white-space:pre;">22</div>
<div style="position:absolute;left:-72.5px;top:235.54px;width:200px;text-align:center;font-size:4.4px;line-height:5.28px;color:#3a3a3a;font-weight:normal;white-space:pre;">23</div>
<div style="position:absolute;left:-72.5px;top:242.73px;width:200px;text-align:center;font-size:4.4px;line-height:5.28px;color:#3a3a3a;font-weight:normal;white-space:pre;">24</div>
<div style="position:absolute;left:-72.5px;top:249.92px;width:200px;text-align:center;font-size:4.4px;line-height:5.28px;color:#3a3a3a;font-weight:normal;white-space:pre;">25</div>
<div style="position:absolute;left:-72.5px;top:257.11px;width:200px;text-align:center;font-size:4.4px;line-height:5.28px;color:#3a3a3a;font-weight:normal;white-space:pre;">26</div>
<div style="position:absolute;left:-72.5px;top:264.30px;width:200px;text-align:center;font-size:4.4px;line-height:5.28px;color:#3a3a3a;font-weight:normal;white-space:pre;">27</div>
<div style="position:absolute;left:-72.5px;top:271.49px;width:200px;text-align:center;font-size:4.4px;line-height:5.28px;color:#3a3a3a;font-weight:normal;white-space:pre;">28</div>
<div style="position:absolute;left:-72.5px;top:278.68px;width:200px;text-align:center;font-size:4.4px;line-height:5.28px;color:#3a3a3a;font-weight:normal;white-space:pre;">29</div>
<div style="position:absolute;left:-72.5px;top:285.87px;width:200px;text-align:center;font-size:4.4px;line-height:5.28px;color:#3a3a3a;font-weight:normal;white-space:pre;">30</div>
<div style="position:absolute;left:-72.5px;top:293.06px;width:200px;text-align:center;font-size:4.4px;line-height:5.28px;color:#3a3a3a;font-weight:normal;white-space:pre;">31</div>
<div style="position:absolute;left:-72.5px;top:300.25px;width:200px;text-align:center;font-size:4.4px;line-height:5.28px;color:#3a3a3a;font-weight:normal;white-space:pre;">32</div>
<div style="position:absolute;left:-72.5px;top:307.44px;width:200px;text-align:center;font-size:4.4px;line-height:5.28px;color:#3a3a3a;font-weight:normal;white-space:pre;">33</div>
<div style="position:absolute;left:-72.5px;top:314.62px;width:200px;text-align:center;font-size:4.4px;line-height:5.28px;color:#3a3a3a;font-weight:normal;white-space:pre;">34</div>
<div style="position:absolute;left:-72.5px;top:321.82px;width:200px;text-align:center;font-size:4.4px;line-height:5.28px;color:#3a3a3a;font-weight:normal;white-space:pre;">35</div>
<div style="position:absolute;left:-72.5px;top:329.00px;width:200px;text-align:center;font-size:4.4px;line-height:5.28px;color:#3a3a3a;font-weight:normal;white-space:pre;">36</div>
<div style="position:absolute;left:-72.5px;top:336.20px;width:200px;text-align:center;font-size:4.4px;line-height:5.28px;color:#3a3a3a;font-weight:normal;white-space:pre;">37</div>
<div style="position:absolute;left:-72.5px;top:343.38px;width:200px;text-align:center;font-size:4.4px;line-height:5.28px;color:#3a3a3a;font-weight:normal;white-space:pre;">38</div>
<div style="position:absolute;left:-72.5px;top:350.58px;width:200px;text-align:center;font-size:4.4px;line-height:5.28px;color:#3a3a3a;font-weight:normal;white-space:pre;">39</div>
<div style="position:absolute;left:-72.5px;top:357.76px;width:200px;text-align:center;font-size:4.4px;line-height:5.28px;color:#3a3a3a;font-weight:normal;white-space:pre;">40</div>
<div style="position:absolute;left:-72.5px;top:364.96px;width:200px;text-align:center;font-size:4.4px;line-height:5.28px;color:#3a3a3a;font-weight:normal;white-space:pre;">41</div>
<div style="position:absolute;left:-72.5px;top:372.14px;width:200px;text-align:center;font-size:4.4px;line-height:5.28px;color:#3a3a3a;font-weight:normal;white-space:pre;">42</div>
<div style="position:absolute;left:-72.5px;top:379.34px;width:200px;text-align:center;font-size:4.4px;line-height:5.28px;color:#3a3a3a;font-weight:normal;white-space:pre;">43</div>
<svg style="position:absolute;left:27.2px;top:70.4px" width="4" height="5" viewBox="0 0 4 5"><path d="M3.6 0.4 V4.2 H0 Z" fill="#c4c4c4"/></svg>
<svg style="position:absolute;left:0;top:0" width="734" height="416"><rect x="31.75" y="75.75" width="23.6" height="7.35" rx="0.6" fill="#eef8f2" stroke="#2a7553" stroke-width="1.05"/><rect x="54.4" y="82.2" width="1.6" height="1.6" fill="#1f6b47"/></svg>
<div style="position:absolute;left:33.1px;top:77.01px;font-size:4.65px;line-height:5.58px;color:#1a1a1a;font-weight:normal;white-space:pre;">Use Editor</div>
<div style="position:absolute;left:56.8px;top:80.9px;width:1.60px;height:0.60px;background:#9a9a9a"></div>
<div style="position:absolute;left:498.8px;top:68.6px;width:7.60px;height:324.80px;background:#f3f4f5"></div>
<svg style="position:absolute;left:0;top:0" width="734" height="416"><rect x="499.8" y="68.8" width="6.4" height="314" rx="3.2" fill="#fbfbfb"/><path d="M502.6 70.6 L504.4 73 H500.8 Z" fill="#5e5e5e"/><rect x="501.1" y="74.9" width="2.9" height="298.7" rx="1.45" fill="#747474"/><path d="M500.8 378.9 H504.4 L502.6 381.3 Z" fill="#5e5e5e"/><line x1="506.5" y1="66.5" x2="506.5" y2="393" stroke="#e2e4e6" stroke-width="0.6"/></svg>
<div style="position:absolute;left:23px;top:382.4px;width:483.40px;height:10.80px;background:#e4e8ee"></div>
<svg style="position:absolute;left:32px;top:385px" width="18" height="5" viewBox="0 0 18 5"><path d="M3.2 0.5 L1.6 2.5 L3.2 4.5" fill="none" stroke="#a8acb0" stroke-width="0.5"/><path d="M13.4 0.5 L15 2.5 L13.4 4.5" fill="none" stroke="#a8acb0" stroke-width="0.5"/></svg>
<div style="position:absolute;left:65px;top:382.4px;width:20.10px;height:10.80px;background:#fff"></div>
<div style="position:absolute;left:-25.099999999999994px;top:385.04px;width:200px;text-align:center;font-size:4.6px;line-height:5.52px;color:#1a1a1a;font-weight:bold;white-space:pre;">Sheet1</div>
<div style="position:absolute;left:67.4px;top:390.4px;width:15.00px;height:0.60px;background:#6fb38c"></div>
<svg style="position:absolute;left:102.4px;top:386px" width="3.6" height="3.6" viewBox="0 0 3.6 3.6"><path d="M1.8 0 V3.6 M0 1.8 H3.6" stroke="#888" stroke-width="0.4"/></svg>
<svg style="position:absolute;left:312px;top:385px" width="4" height="6" viewBox="0 0 4 6"><circle cx="1.9" cy="1.3" r="0.4" fill="#a8a8a8"/><circle cx="1.9" cy="2.7" r="0.4" fill="#a8a8a8"/><circle cx="1.9" cy="4.1" r="0.4" fill="#a8a8a8"/></svg>
<div style="position:absolute;left:320.4px;top:384.6px;width:178.60px;height:6.60px;background:#f7f8f9;border-radius:3px"></div>
<svg style="position:absolute;left:321.4px;top:386px" width="2.8" height="4" viewBox="0 0 3 4"><path d="M3 0 V4 L0 2 Z" fill="#505050"/></svg>
<div style="position:absolute;left:326.2px;top:386.2px;width:160.80px;height:3.20px;background:#6f6f6f;border-radius:1.6px"></div>
<svg style="position:absolute;left:495.3px;top:386.3px" width="2.6" height="3.6" viewBox="0 0 3 4"><path d="M0 0 V4 L3 2 Z" fill="#555"/></svg>
<div style="position:absolute;left:23px;top:393.2px;width:689.90px;height:10.80px;background:#f4f4f5"></div>
<div style="position:absolute;left:26.9px;top:395.96px;font-size:3.9px;line-height:4.68px;color:#555;font-weight:normal;white-space:pre;">Ready</div>
<svg style="position:absolute;left:45px;top:395.6px" width="4.4" height="4.4" viewBox="0 0 4.4 4.4"><rect x="0.25" y="0.25" width="3.9" height="3.9" fill="none" stroke="#666" stroke-width="0.45"/><path d="M0.3 1.5 H4.1 M0.3 2.9 H4.1 M2.2 0.3 V4.1" stroke="#666" stroke-width="0.4"/></svg>
<svg style="position:absolute;left:55.5px;top:395px" width="6" height="6" viewBox="0 0 6 6"><circle cx="3" cy="1" r="0.6" fill="#666"/><path d="M1 2.2 H5 M3 2 V3.8 L1.8 5.6 M3 3.8 L4.2 5.6" fill="none" stroke="#666" stroke-width="0.45"/></svg>
<div style="position:absolute;left:62.8px;top:395.68px;font-size:4.2px;line-height:5.04px;color:#555;font-weight:normal;white-space:pre;">Accessibility: Good to go</div>
<div style="position:absolute;left:606.2px;top:393.8px;width:13.80px;height:7.70px;background:#dfe1e4"></div>
<svg style="position:absolute;left:0;top:0" width="734" height="416"><rect x="610.6" y="395.4" width="5" height="4.6" fill="#7c7c7c"/><path d="M610.8 397.2 H615.4 M612.6 397.2 V399.8" stroke="#cfcfcf" stroke-width="0.4"/><rect x="624.8" y="395.4" width="5" height="4.6" fill="#808080"/><rect x="625.8" y="396.2" width="3" height="3" fill="#b8b8b8"/><rect x="639.3" y="395.5" width="4.8" height="4.4" fill="none" stroke="#7a7a7a" stroke-width="0.6"/><path d="M639.4 396.6 H644" stroke="#7a7a7a" stroke-width="0.6"/><path d="M640.6 398.4 H642.8" stroke="#aaa" stroke-width="0.4"/><path d="M651.2 397.7 H653.4" stroke="#8a8a8a" stroke-width="0.45"/><path d="M656.2 397.7 H691.6" stroke="#cfcfcf" stroke-width="0.45"/><rect x="673.2" y="395.9" width="1.5" height="3.7" rx="0.4" fill="#666"/><path d="M693.6 397.7 H695.8 M694.7 396.6 V398.8" stroke="#8a8a8a" stroke-width="0.45"/></svg>
<div style="position:absolute;left:511.20000000000005px;top:395.74px;width:200px;text-align:right;font-size:4.1px;line-height:4.92px;color:#444;font-weight:normal;white-space:pre;">100%</div>
<div style="position:absolute;left:506.4px;top:66px;width:206.50px;height:327.20px;background:#f0f0f0"></div>
<div style="position:absolute;left:506.4px;top:66px;width:206.50px;height:0.60px;background:#e0e0e0"></div>
<div style="position:absolute;left:511.9px;top:73.90px;font-size:5.0px;line-height:6.00px;color:#333;font-weight:normal;white-space:pre;">Code</div>
<svg style="position:absolute;left:691.3px;top:75.6px" width="5" height="3.5" viewBox="0 0 5 3.5"><path d="M0.3 0.4 L2.5 3 L4.7 0.4" fill="none" stroke="#666" stroke-width="0.55"/></svg>
<svg style="position:absolute;left:702.7px;top:75.1px" width="4.4" height="4.4" viewBox="0 0 4.4 4.4"><path d="M0.3 0.3 L4.1 4.1 M4.1 0.3 L0.3 4.1" stroke="#666" stroke-width="0.55"/></svg>
<div style="position:absolute;left:511px;top:84px;width:197.50px;height:304.50px;background:#fff;border:0.6px solid #dedede"></div>
<svg style="position:absolute;left:514.7px;top:88.7px" width="7.4" height="7.4" viewBox="0 0 14 14"><path d="M11.8 4.6 A5.4 5.4 0 1 0 12 9" fill="none" stroke="#3aa54a" stroke-width="1.8" stroke-dasharray="3.6 1"/><path d="M10 3 L12.6 4.8 L12.8 1.8" fill="#3aa54a"/></svg>
<div style="position:absolute;left:525px;top:88.94px;font-size:5.1px;line-height:6.12px;color:#2a2a2a;font-weight:bold;white-space:pre;">Anaconda Code</div>
<svg style="position:absolute;left:565px;top:88.8px" width="3" height="3" viewBox="0 0 3 3"><path d="M1.5 0.2 V2.8 M0.3 0.9 L2.7 2.1 M2.7 0.9 L0.3 2.1" stroke="#2fb36a" stroke-width="0.6"/></svg>
<svg style="position:absolute;left:639.6px;top:89.8px" width="5" height="4.6" viewBox="0 0 5 4.6"><rect x="0" y="0" width="2.1" height="1.3" fill="#4a4a4a"/><rect x="2.7" y="0" width="2.1" height="1.3" fill="#4a4a4a"/><rect x="0" y="1.7" width="2.1" height="1.2" fill="#4a4a4a"/><rect x="2.7" y="1.7" width="2.1" height="1.2" fill="#4a4a4a"/><rect x="0" y="3.3" width="2.1" height="1.3" fill="#4a4a4a"/><rect x="2.7" y="3.3" width="2.1" height="1.3" fill="#4a4a4a"/></svg>
<svg style="position:absolute;left:652px;top:89.4px" width="7" height="6.2" viewBox="0 0 7 6.2"><rect x="0.4" y="0.4" width="5" height="5.2" rx="0.5" fill="#cdeed6" stroke="#6cc487" stroke-width="0.5"/><path d="M1.4 1.8 H3.6 M1.4 3 H3" stroke="#8fd0a2" stroke-width="0.4"/><circle cx="4.9" cy="4.7" r="1.4" fill="#22b150"/><path d="M4.2 4.7 L4.8 5.2 L5.6 4.2" fill="none" stroke="#fff" stroke-width="0.35"/></svg>
<svg style="position:absolute;left:664.6px;top:89.2px" width="6.8" height="6.4" viewBox="0 0 6.8 6.4"><path d="M0.4 0.5 H2.4 L3.2 1.3 H5.8 V5.4 H0.4 Z" fill="none" stroke="#666" stroke-width="0.55"/><rect x="5" y="5" width="1.4" height="1.2" fill="#bbb"/></svg>
<svg style="position:absolute;left:678.6px;top:89.9px" width="5" height="4.6" viewBox="0 0 5 4.6"><circle cx="2.5" cy="2.3" r="2.2" fill="#676b76"/><path d="M0.8 2.1 H4.2" stroke="#b8bbc2" stroke-width="0.55"/></svg>
<svg style="position:absolute;left:691.8px;top:89.3px" width="4.6" height="5.6" viewBox="0 0 4.6 5.6"><circle cx="2.3" cy="1.3" r="1.15" fill="#4a4a4a"/><path d="M0.2 5.4 V4.2 Q0.2 2.7 2.3 2.7 Q4.4 2.7 4.4 4.2 V5.4 Z" fill="#4a4a4a"/></svg>
<div style="position:absolute;left:702.5px;top:84.2px;width:6.00px;height:16.40px;background:#fff;border:0.6px solid #d8d8d8"></div>
<svg style="position:absolute;left:704.6px;top:90.8px" width="2" height="3" viewBox="0 0 2 3"><path d="M1.7 0.2 L0.4 1.5 L1.7 2.8" fill="none" stroke="#777" stroke-width="0.45"/></svg>
<div style="position:absolute;left:511.5px;top:99.8px;width:197.00px;height:0.60px;background:#e6e6e6"></div>
<svg style="position:absolute;left:0;top:0" width="734" height="416"><circle cx="518.4" cy="108.9" r="2.1" fill="#2ab35b"/></svg>
<div style="position:absolute;left:527px;top:105.15px;font-size:6.25px;line-height:7.50px;color:#333;font-weight:normal;white-space:pre;-webkit-text-stroke:0.08px #333">Imports and Definitions</div>
<svg style="position:absolute;left:689px;top:104px" width="16" height="10" viewBox="0 0 16 10"><rect x="1.1" y="1" width="13.8" height="8.2" rx="4.1" fill="#5b5ee6"/><circle cx="11" cy="5.1" r="3.0" fill="#fff"/><path d="M11 5.1 L13.2 3.6 A2.3 2.3 0 0 1 9.6 7 Z" fill="#4a4cc8"/><circle cx="11" cy="5.1" r="2.4" fill="none" stroke="#fff" stroke-width="0.5"/></svg>
<div style="position:absolute;left:515.4px;top:120.1px;width:19.50px;height:12.00px;background:#e8eaef;border-radius:1.5px"></div>
<div style="position:absolute;left:518.9px;top:123.32px;font-size:5.3px;line-height:6.36px;color:#5457c0;font-weight:normal;white-space:pre;">Code</div>
<div style="position:absolute;left:538.6px;top:123.26px;font-size:5.4px;line-height:6.48px;color:#7b7fd0;font-weight:normal;white-space:pre;">Logs</div>
<div style="position:absolute;left:515.5px;top:136.4px;width:189.10px;height:216.20px;background:#1e1e1e"></div>
<div style="position:absolute;left:515.5px;top:137.45px;width:189.10px;height:7.87px;background:#282828"></div>
<div style="position:absolute;left:515.5px;top:137.45px;width:7.50px;text-align:right;font-family:'Liberation Mono', monospace;font-size:4.57px;line-height:7.07px;color:#d0d0d0;white-space:pre">1</div>
<div style="position:absolute;left:529.7px;top:137.45px;width:174.90px;overflow:hidden;font-family:'Liberation Mono', monospace;font-size:4.57px;line-height:7.07px;white-space:pre"><span style="color:#707070;font-style:italic"># Add imports</span></div>
<div style="position:absolute;left:515.5px;top:144.52px;width:7.50px;text-align:right;font-family:'Liberation Mono', monospace;font-size:4.57px;line-height:7.07px;color:#747474;white-space:pre">2</div>
<div style="position:absolute;left:529.7px;top:144.52px;width:174.90px;overflow:hidden;font-family:'Liberation Mono', monospace;font-size:4.57px;line-height:7.07px;white-space:pre"><span style="color:#cf98cc">import</span> <span style="color:#3fc3c0">math</span></div>
<div style="position:absolute;left:515.5px;top:151.59px;width:7.50px;text-align:right;font-family:'Liberation Mono', monospace;font-size:4.57px;line-height:7.07px;color:#747474;white-space:pre">3</div>
<div style="position:absolute;left:529.7px;top:151.59px;width:174.90px;overflow:hidden;font-family:'Liberation Mono', monospace;font-size:4.57px;line-height:7.07px;white-space:pre"><span style="color:#cf98cc">import</span> <span style="color:#3fc3c0">numpy</span> <span style="color:#4f95d8">as</span> <span style="color:#3fc3c0">np</span></div>
<div style="position:absolute;left:515.5px;top:158.66px;width:7.50px;text-align:right;font-family:'Liberation Mono', monospace;font-size:4.57px;line-height:7.07px;color:#747474;white-space:pre">4</div>
<div style="position:absolute;left:529.7px;top:158.66px;width:174.90px;overflow:hidden;font-family:'Liberation Mono', monospace;font-size:4.57px;line-height:7.07px;white-space:pre"><span style="color:#cf98cc">import</span> <span style="color:#3fc3c0">pandas</span> <span style="color:#4f95d8">as</span> <span style="color:#3fc3c0">pd</span></div>
<div style="position:absolute;left:515.5px;top:165.73px;width:7.50px;text-align:right;font-family:'Liberation Mono', monospace;font-size:4.57px;line-height:7.07px;color:#747474;white-space:pre">5</div>
<div style="position:absolute;left:515.5px;top:172.80px;width:7.50px;text-align:right;font-family:'Liberation Mono', monospace;font-size:4.57px;line-height:7.07px;color:#747474;white-space:pre">6</div>
<div style="position:absolute;left:529.7px;top:172.80px;width:174.90px;overflow:hidden;font-family:'Liberation Mono', monospace;font-size:4.57px;line-height:7.07px;white-space:pre"><span style="color:#707070;font-style:italic"># Define classes and functions</span></div>
<div style="position:absolute;left:515.5px;top:179.87px;width:7.50px;text-align:right;font-family:'Liberation Mono', monospace;font-size:4.57px;line-height:7.07px;color:#747474;white-space:pre">7</div>
<svg style="position:absolute;left:524.6px;top:182.07px" width="2" height="3" viewBox="0 0 2 3"><path d="M0.3 0.3 L1.6 1.5 L0.3 2.7" fill="none" stroke="#8a8a8a" stroke-width="0.45"/></svg>
<div style="position:absolute;left:529.7px;top:179.87px;width:174.90px;overflow:hidden;font-family:'Liberation Mono', monospace;font-size:4.57px;line-height:7.07px;white-space:pre"><span style="color:#4f95d8">def</span> <span style="color:#dcdcaa">to_df</span><span style="color:#e8c547">(</span><span style="color:#3fc3c0">data</span><span style="color:#e8c547">)</span> <span style="color:#d4d4d4">-</span><span style="color:#d4d4d4">&gt;</span> <span style="color:#3fc3c0">pd</span><span style="color:#d4d4d4">.</span><span style="color:#3fc3c0">DataFrame</span><span style="color:#d4d4d4">:</span></div>
<div style="position:absolute;left:515.5px;top:186.94px;width:7.50px;text-align:right;font-family:'Liberation Mono', monospace;font-size:4.57px;line-height:7.07px;color:#747474;white-space:pre">19</div>
<div style="position:absolute;left:515.5px;top:194.01px;width:7.50px;text-align:right;font-family:'Liberation Mono', monospace;font-size:4.57px;line-height:7.07px;color:#747474;white-space:pre">20</div>
<svg style="position:absolute;left:524.6px;top:196.21px" width="2" height="3" viewBox="0 0 2 3"><path d="M0.3 0.3 L1.6 1.5 L0.3 2.7" fill="none" stroke="#8a8a8a" stroke-width="0.45"/></svg>
<div style="position:absolute;left:529.7px;top:194.01px;width:174.90px;overflow:hidden;font-family:'Liberation Mono', monospace;font-size:4.57px;line-height:7.07px;white-space:pre"><span style="color:#4f95d8">def</span> <span style="color:#dcdcaa">to_array</span><span style="color:#e8c547">(</span><span style="color:#3fc3c0">data</span><span style="color:#e8c547">)</span> <span style="color:#d4d4d4">-</span><span style="color:#d4d4d4">&gt;</span> <span style="color:#3fc3c0">np</span><span style="color:#d4d4d4">.</span><span style="color:#3fc3c0">ndarray</span><span style="color:#d4d4d4">:</span></div>
<div style="position:absolute;left:515.5px;top:201.08px;width:7.50px;text-align:right;font-family:'Liberation Mono', monospace;font-size:4.57px;line-height:7.07px;color:#747474;white-space:pre">29</div>
<div style="position:absolute;left:515.5px;top:208.15px;width:7.50px;text-align:right;font-family:'Liberation Mono', monospace;font-size:4.57px;line-height:7.07px;color:#747474;white-space:pre">30</div>
<svg style="position:absolute;left:524.2px;top:211.55px" width="3" height="2" viewBox="0 0 3 2"><path d="M0.3 0.3 L1.5 1.6 L2.7 0.3" fill="none" stroke="#8a8a8a" stroke-width="0.45"/></svg>
<div style="position:absolute;left:529.7px;top:208.15px;width:174.90px;overflow:hidden;font-family:'Liberation Mono', monospace;font-size:4.57px;line-height:7.07px;white-space:pre"><span style="color:#4f95d8">def</span> <span style="color:#dcdcaa">to_list</span><span style="color:#e8c547">(</span><span style="color:#3fc3c0">data</span><span style="color:#e8c547">)</span> <span style="color:#d4d4d4">-</span><span style="color:#d4d4d4">&gt;</span> <span style="color:#3fc3c0">list</span><span style="color:#d4d4d4">:</span></div>
<div style="position:absolute;left:515.5px;top:215.22px;width:7.50px;text-align:right;font-family:'Liberation Mono', monospace;font-size:4.57px;line-height:7.07px;color:#747474;white-space:pre">31</div>
<div style="position:absolute;left:529.7px;top:215.22px;width:174.90px;overflow:hidden;font-family:'Liberation Mono', monospace;font-size:4.57px;line-height:7.07px;white-space:pre"><span style="color:#c88c6c">    &quot;&quot;&quot;</span></div>
<div style="position:absolute;left:515.5px;top:222.29px;width:7.50px;text-align:right;font-family:'Liberation Mono', monospace;font-size:4.57px;line-height:7.07px;color:#747474;white-space:pre">32</div>
<div style="position:absolute;left:529.7px;top:222.29px;width:174.90px;overflow:hidden;font-family:'Liberation Mono', monospace;font-size:4.57px;line-height:7.07px;white-space:pre"><span style="color:#c88c6c">    Converts a REF (i.e. list of lists) into a 1-d list.</span></div>
<div style="position:absolute;left:515.5px;top:229.36px;width:7.50px;text-align:right;font-family:'Liberation Mono', monospace;font-size:4.57px;line-height:7.07px;color:#747474;white-space:pre">33</div>
<div style="position:absolute;left:529.7px;top:229.36px;width:174.90px;overflow:hidden;font-family:'Liberation Mono', monospace;font-size:4.57px;line-height:7.07px;white-space:pre"><span style="color:#c88c6c">    Handles wide (1xn) or tall (nx1) data.</span></div>
<div style="position:absolute;left:515.5px;top:236.43px;width:7.50px;text-align:right;font-family:'Liberation Mono', monospace;font-size:4.57px;line-height:7.07px;color:#747474;white-space:pre">34</div>
<div style="position:absolute;left:515.5px;top:243.50px;width:7.50px;text-align:right;font-family:'Liberation Mono', monospace;font-size:4.57px;line-height:7.07px;color:#747474;white-space:pre">35</div>
<div style="position:absolute;left:529.7px;top:243.50px;width:174.90px;overflow:hidden;font-family:'Liberation Mono', monospace;font-size:4.57px;line-height:7.07px;white-space:pre"><span style="color:#c88c6c">    Usage: x = to_list(REF(&quot;A1:B55&quot;))</span></div>
<div style="position:absolute;left:515.5px;top:250.57px;width:7.50px;text-align:right;font-family:'Liberation Mono', monospace;font-size:4.57px;line-height:7.07px;color:#747474;white-space:pre">36</div>
<div style="position:absolute;left:529.7px;top:250.57px;width:174.90px;overflow:hidden;font-family:'Liberation Mono', monospace;font-size:4.57px;line-height:7.07px;white-space:pre"><span style="color:#c88c6c">    &quot;&quot;&quot;</span></div>
<div style="position:absolute;left:515.5px;top:257.64px;width:7.50px;text-align:right;font-family:'Liberation Mono', monospace;font-size:4.57px;line-height:7.07px;color:#747474;white-space:pre">37</div>
<svg style="position:absolute;left:524.2px;top:261.04px" width="3" height="2" viewBox="0 0 3 2"><path d="M0.3 0.3 L1.5 1.6 L2.7 0.3" fill="none" stroke="#8a8a8a" stroke-width="0.45"/></svg>
<div style="position:absolute;left:529.7px;top:257.64px;width:174.90px;overflow:hidden;font-family:'Liberation Mono', monospace;font-size:4.57px;line-height:7.07px;white-space:pre">    <span style="color:#cf98cc">if</span> <span style="color:#4f95d8">not</span> <span style="color:#4fb35c">hasattr</span><span style="color:#e8c547">(</span><span style="color:#3fc3c0">data</span><span style="color:#d4d4d4">,</span> <span style="color:#c88c6c">&#x27;__len__&#x27;</span><span style="color:#e8c547">)</span><span style="color:#d4d4d4">:</span> <span style="color:#707070;font-style:italic"># data is scalar</span></div>
<div style="position:absolute;left:515.5px;top:264.71px;width:7.50px;text-align:right;font-family:'Liberation Mono', monospace;font-size:4.57px;line-height:7.07px;color:#747474;white-space:pre">38</div>
<div style="position:absolute;left:529.7px;top:264.71px;width:174.90px;overflow:hidden;font-family:'Liberation Mono', monospace;font-size:4.57px;line-height:7.07px;white-space:pre">        <span style="color:#cf98cc">return</span> <span style="color:#d4d4d4">[</span><span style="color:#3fc3c0">data</span><span style="color:#d4d4d4">]</span></div>
<div style="position:absolute;left:515.5px;top:271.78px;width:7.50px;text-align:right;font-family:'Liberation Mono', monospace;font-size:4.57px;line-height:7.07px;color:#747474;white-space:pre">39</div>
<svg style="position:absolute;left:524.2px;top:275.18px" width="3" height="2" viewBox="0 0 3 2"><path d="M0.3 0.3 L1.5 1.6 L2.7 0.3" fill="none" stroke="#8a8a8a" stroke-width="0.45"/></svg>
<div style="position:absolute;left:529.7px;top:271.78px;width:174.90px;overflow:hidden;font-family:'Liberation Mono', monospace;font-size:4.57px;line-height:7.07px;white-space:pre">    <span style="color:#cf98cc">if</span> <span style="color:#4fb35c">len</span><span style="color:#e8c547">(</span><span style="color:#3fc3c0">data</span><span style="color:#e8c547">)</span> <span style="color:#d4d4d4">=</span><span style="color:#d4d4d4">=</span> <span style="color:#b5cea8">0</span> <span style="color:#4f95d8">or</span> <span style="color:#4f95d8">not</span> <span style="color:#4fb35c">hasattr</span><span style="color:#e8c547">(</span><span style="color:#3fc3c0">data</span><span style="color:#d4d4d4">[</span><span style="color:#b5cea8">0</span><span style="color:#d4d4d4">]</span><span style="color:#d4d4d4">,</span> <span style="color:#c88c6c">&#x27;__len__&#x27;</span><span style="color:#e8c547">)</span><span style="color:#d4d4d4">:</span> <span style="color:#707070;font-style:italic"># data is flat</span></div>
<div style="position:absolute;left:515.5px;top:278.85px;width:7.50px;text-align:right;font-family:'Liberation Mono', monospace;font-size:4.57px;line-height:7.07px;color:#747474;white-space:pre">40</div>
<div style="position:absolute;left:529.7px;top:278.85px;width:174.90px;overflow:hidden;font-family:'Liberation Mono', monospace;font-size:4.57px;line-height:7.07px;white-space:pre">        <span style="color:#cf98cc">return</span> <span style="color:#4fb35c">list</span><span style="color:#e8c547">(</span><span style="color:#3fc3c0">data</span><span style="color:#e8c547">)</span></div>
<div style="position:absolute;left:515.5px;top:285.92px;width:7.50px;text-align:right;font-family:'Liberation Mono', monospace;font-size:4.57px;line-height:7.07px;color:#747474;white-space:pre">41</div>
<svg style="position:absolute;left:524.2px;top:289.32px" width="3" height="2" viewBox="0 0 3 2"><path d="M0.3 0.3 L1.5 1.6 L2.7 0.3" fill="none" stroke="#8a8a8a" stroke-width="0.45"/></svg>
<div style="position:absolute;left:529.7px;top:285.92px;width:174.90px;overflow:hidden;font-family:'Liberation Mono', monospace;font-size:4.57px;line-height:7.07px;white-space:pre">    <span style="color:#cf98cc">if</span> <span style="color:#4fb35c">len</span><span style="color:#e8c547">(</span><span style="color:#3fc3c0">data</span><span style="color:#e8c547">)</span> <span style="color:#d4d4d4">=</span><span style="color:#d4d4d4">=</span> <span style="color:#b5cea8">1</span><span style="color:#d4d4d4">:</span> <span style="color:#707070;font-style:italic"># data is wide</span></div>
<div style="position:absolute;left:515.5px;top:292.99px;width:7.50px;text-align:right;font-family:'Liberation Mono', monospace;font-size:4.57px;line-height:7.07px;color:#747474;white-space:pre">42</div>
<div style="position:absolute;left:529.7px;top:292.99px;width:174.90px;overflow:hidden;font-family:'Liberation Mono', monospace;font-size:4.57px;line-height:7.07px;white-space:pre">        <span style="color:#cf98cc">return</span> <span style="color:#4fb35c">list</span><span style="color:#e8c547">(</span><span style="color:#3fc3c0">data</span><span style="color:#d4d4d4">[</span><span style="color:#b5cea8">0</span><span style="color:#d4d4d4">]</span><span style="color:#e8c547">)</span></div>
<div style="position:absolute;left:515.5px;top:300.06px;width:7.50px;text-align:right;font-family:'Liberation Mono', monospace;font-size:4.57px;line-height:7.07px;color:#747474;white-space:pre">43</div>
<svg style="position:absolute;left:524.2px;top:303.46px" width="3" height="2" viewBox="0 0 3 2"><path d="M0.3 0.3 L1.5 1.6 L2.7 0.3" fill="none" stroke="#8a8a8a" stroke-width="0.45"/></svg>
<div style="position:absolute;left:529.7px;top:300.06px;width:174.90px;overflow:hidden;font-family:'Liberation Mono', monospace;font-size:4.57px;line-height:7.07px;white-space:pre">    <span style="color:#cf98cc">elif</span> <span style="color:#4fb35c">len</span><span style="color:#e8c547">(</span><span style="color:#3fc3c0">data</span><span style="color:#d4d4d4">[</span><span style="color:#b5cea8">0</span><span style="color:#d4d4d4">]</span><span style="color:#e8c547">)</span> <span style="color:#d4d4d4">=</span><span style="color:#d4d4d4">=</span> <span style="color:#b5cea8">1</span><span style="color:#d4d4d4">:</span> <span style="color:#707070;font-style:italic">#data is tall</span></div>
<div style="position:absolute;left:515.5px;top:307.13px;width:7.50px;text-align:right;font-family:'Liberation Mono', monospace;font-size:4.57px;line-height:7.07px;color:#747474;white-space:pre">44</div>
<div style="position:absolute;left:529.7px;top:307.13px;width:174.90px;overflow:hidden;font-family:'Liberation Mono', monospace;font-size:4.57px;line-height:7.07px;white-space:pre">        <span style="color:#cf98cc">return</span> <span style="color:#d4d4d4">[</span><span style="color:#9cdcfe">x</span><span style="color:#d4d4d4">[</span><span style="color:#b5cea8">0</span><span style="color:#d4d4d4">]</span> <span style="color:#cf98cc">for</span> <span style="color:#9cdcfe">x</span> <span style="color:#4f95d8">in</span> <span style="color:#3fc3c0">data</span><span style="color:#d4d4d4">]</span></div>
<div style="position:absolute;left:515.5px;top:314.20px;width:7.50px;text-align:right;font-family:'Liberation Mono', monospace;font-size:4.57px;line-height:7.07px;color:#747474;white-space:pre">45</div>
<svg style="position:absolute;left:524.2px;top:317.60px" width="3" height="2" viewBox="0 0 3 2"><path d="M0.3 0.3 L1.5 1.6 L2.7 0.3" fill="none" stroke="#8a8a8a" stroke-width="0.45"/></svg>
<div style="position:absolute;left:529.7px;top:314.20px;width:174.90px;overflow:hidden;font-family:'Liberation Mono', monospace;font-size:4.57px;line-height:7.07px;white-space:pre">    <span style="color:#cf98cc">else</span><span style="color:#d4d4d4">:</span></div>
<div style="position:absolute;left:515.5px;top:321.27px;width:7.50px;text-align:right;font-family:'Liberation Mono', monospace;font-size:4.57px;line-height:7.07px;color:#747474;white-space:pre">46</div>
<div style="position:absolute;left:529.7px;top:321.27px;width:174.90px;overflow:hidden;font-family:'Liberation Mono', monospace;font-size:4.57px;line-height:7.07px;white-space:pre">        <span style="color:#cf98cc">raise</span> <span style="color:#4fb35c">TypeError</span><span style="color:#e8c547">(</span><span style="color:#c88c6c">f&quot;data must be 1xn or nx1, not {len(data)}x{len(data[0])}&quot;</span><span style="color:#e8c547">)</span></div>
<div style="position:absolute;left:515.5px;top:328.34px;width:7.50px;text-align:right;font-family:'Liberation Mono', monospace;font-size:4.57px;line-height:7.07px;color:#747474;white-space:pre">47</div>
<div style="position:absolute;left:515.5px;top:335.41px;width:7.50px;text-align:right;font-family:'Liberation Mono', monospace;font-size:4.57px;line-height:7.07px;color:#747474;white-space:pre">48</div>
<svg style="position:absolute;left:0;top:0" width="734" height="416"><rect x="618.9" y="180.1" width="4.4" height="6.7" rx="0.8" fill="#f2f2f2"/><path d="M619.8 184.9 H622.4" stroke="#777" stroke-width="0.5" stroke-dasharray="0.5 0.4"/><rect x="621.3" y="194.1" width="4.5" height="6.7" rx="0.8" fill="#f2f2f2"/><path d="M622.2 198.9 H624.9" stroke="#777" stroke-width="0.5" stroke-dasharray="0.5 0.4"/></svg>
<div style="position:absolute;left:529.3px;top:216.6px;width:21.80px;height:8.20px;background:#fff;box-shadow:0 0 1px rgba(0,0,0,.4)"></div>
<div style="position:absolute;left:532.0px;top:218.35px;font-size:4.75px;line-height:5.70px;color:#222;font-weight:normal;white-space:pre;transform:scaleX(0.9);transform-origin:0 0">Fold line</div>
<div style="position:absolute;left:515.5px;top:352.6px;width:146.00px;height:2.90px;background:#dcdcdc"></div>
<div style="position:absolute;left:661.5px;top:352.6px;width:43.10px;height:2.90px;background:#efefef"></div>
<div style="position:absolute;left:515.5px;top:359.3px;width:189.10px;height:11.30px;background:#10c45c;border-radius:1.6px"></div>
<div style="position:absolute;left:510.20000000000005px;top:362.86px;width:200px;text-align:center;font-size:4.9px;line-height:5.88px;color:#1b3a26;font-weight:normal;white-space:pre;">Run</div>
<div style="position:absolute;left:510.20000000000005px;top:376.14px;width:200px;text-align:center;font-size:5.1px;line-height:6.12px;color:#555;font-weight:normal;white-space:pre;">Cancel</div>
</div></body></html>
